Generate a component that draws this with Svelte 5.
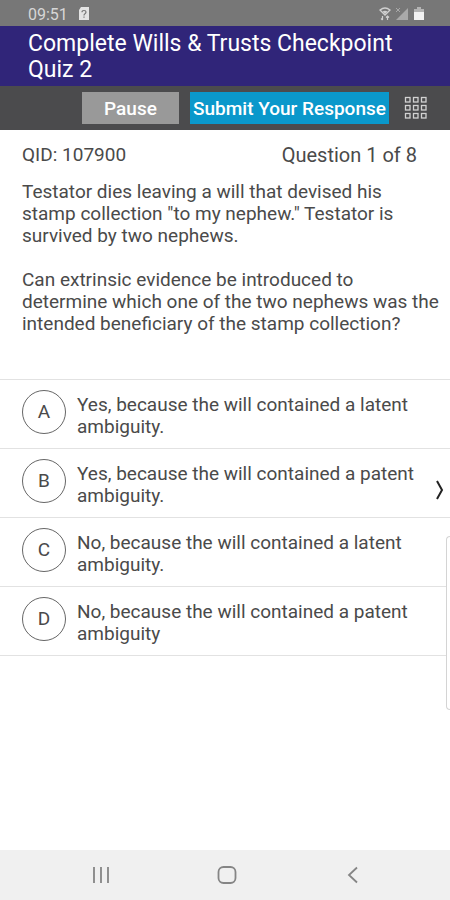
<script>
  const title = 'Complete Wills & Trusts Checkpoint Quiz 2';
  const paragraphs = [
    'Testator dies leaving a will that devised his\nstamp collection "to my nephew." Testator is\nsurvived by two nephews.',
    'Can extrinsic evidence be introduced to\ndetermine which one of the two nephews was the intended beneficiary of the stamp collection?',
  ];
  const answers = [
    { letter: 'A', text: 'Yes, because the will contained a latent ambiguity.' },
    { letter: 'B', text: 'Yes, because the will contained a patent ambiguity.' },
    { letter: 'C', text: 'No, because the will contained a latent ambiguity.' },
    { letter: 'D', text: 'No, because the will contained a patent ambiguity' },
  ];
  const cells = [1, 9, 17];

  let selected = $state(null);
  let paused = $state(false);
</script>

<div class="screen">
  <div class="status">
    <span>09:51</span>
    <svg width="12" height="14" viewBox="0 0 12 14">
      <path d="M3 0h8v13H1V3z" fill="#e4e4e4" />
      <path d="M4 5.2q0-1.7 2-1.7t2 1.6q0 1-1 1.6T6 8.4M6 9.4v1.3" fill="none" stroke="#777" stroke-width="1.2" />
    </svg>
    <div class="signals">
      <svg width="12" height="14" viewBox="0 0 12 14" fill="none" stroke="#d0d0d0">
        <path d="M1 3q5-4 10 0L6 8z" stroke-width="1.3" />
        <path d="M3.5 4.5q2.5-1.5 5 0L6 7z" fill="#d0d0d0" stroke="none" />
        <path d="M3.5 9v4M2 11.5L3.5 13M8.5 13V9M7 10.5L8.500 9 10 10.5" stroke-width="1.2" />
      </svg>
      <svg width="14" height="14" viewBox="0 0 14 14">
        <path d="M13 1v12H1z" fill="#a9a9a9" />
        <path d="M1 1l4 4M5 1L1 5" stroke="#a9a9a9" />
      </svg>
      <svg width="12" height="14" viewBox="0 0 12 14">
        <path d="M4 0h4v2h3v3H1V2h3z" fill="#b4b4b4" />
        <path d="M1 5h10v8H1z" fill="#f2f2f2" />
      </svg>
    </div>
  </div>

  <h1>{title}</h1>

  <div class="toolbar">
    <button class="pause" class:paused onclick={() => (paused = !paused)}>Pause</button>
    <button class="submit">Submit Your Response</button>
    <button class="grid" aria-label="All questions">
      <svg width="24" height="24" viewBox="0 0 24 24" fill="none" stroke="#d2d2d2" stroke-width="1.3">
        {#each cells as y}
          {#each cells as x}
            <rect x={x + 0.5} y={y + 0.5} width="4.5" height="4.5" />
          {/each}
        {/each}
      </svg>
    </button>
  </div>

  <main>
    <div class="meta">
      <span>QID: 107900</span>
      <span class="count">Question 1 of 8</span>
    </div>

    <div class="question">
      {#each paragraphs as paragraph}
        <p>{paragraph}</p>
      {/each}
    </div>

    <div class="answers">
      {#each answers as answer}
        <button
          class="answer"
          class:selected={selected === answer.letter}
          onclick={() => (selected = answer.letter)}
        >
          <span class="letter">{answer.letter}</span>
          <span class="text">{answer.text}</span>
        </button>
      {/each}
      <button class="next" aria-label="Next question">
        <svg width="10" height="22" viewBox="0 0 10 22" fill="none" stroke="#222" stroke-width="2">
          <path d="M2 2l5 9-5 9" />
        </svg>
      </button>
      <div class="drawer"></div>
    </div>
  </main>

  <nav>
    <button aria-label="Recent apps">
      <svg width="20" height="20" viewBox="0 0 20 20" stroke="#858585" stroke-width="1.8">
        <path d="M3 2v16M10 2v16M17 2v16" />
      </svg>
    </button>
    <button aria-label="Home">
      <svg width="20" height="20" viewBox="0 0 20 20" fill="none" stroke="#858585" stroke-width="1.8">
        <rect x="1.5" y="2" width="17" height="16" rx="5" />
      </svg>
    </button>
    <button aria-label="Back">
      <svg width="20" height="20" viewBox="0 0 20 20" fill="none" stroke="#858585" stroke-width="1.8">
        <path d="M14 2.5L6 10l8 7.5" />
      </svg>
    </button>
  </nav>
</div>

<style>
  :global(body) {
    background: #fff;
  }
  .screen {
    display: flex;
    flex-direction: column;
    min-height: 100vh;
    font-family: Roboto, "Liberation Sans", sans-serif;
    color: #4a4a4a;
  }
  button {
    padding: 0;
    border: none;
    background: none;
    font: inherit;
    color: inherit;
    cursor: pointer;
  }
  svg {
    display: block;
  }
  .status {
    display: flex;
    align-items: center;
    gap: 10px;
    height: 26px;
    padding: 2px 25px 0 28px;
    box-sizing: border-box;
    background: #777;
    color: #d6d6d6;
    font-size: 16px;
  }
  .signals {
    display: flex;
    gap: 4px;
    margin-left: auto;
  }
  h1 {
    margin: 0;
    padding: 5px 28px 3px;
    background: #302579;
    color: #fff;
    font-size: 23px;
    font-weight: 400;
    line-height: 26px;
  }
  .toolbar {
    display: flex;
    justify-content: flex-end;
    align-items: center;
    height: 44px;
    padding-right: 22px;
    background: #4b4b4d;
    color: #fff;
    font-size: 19px;
    font-weight: 500;
  }
  .pause,
  .submit {
    height: 32px;
    white-space: nowrap;
  }
  .pause {
    width: 97px;
    margin-right: 11px;
    background: #999;
  }
  .pause.paused {
    background: #7d7d7d;
  }
  .submit {
    width: 199px;
    margin-right: 15px;
    background: #0a98cb;
  }
  main {
    flex: 1;
  }
  .meta {
    display: flex;
    justify-content: space-between;
    padding: 14px 33px 0 22px;
    font-size: 19px;
    line-height: 22px;
  }
  .count {
    font-size: 20px;
  }
  .question {
    padding: 15px 8px 44px 22px;
    font-size: 19px;
    line-height: 22px;
    white-space: pre-line;
  }
  .question p {
    margin: 0;
  }
  .question p + p {
    margin-top: 22px;
  }
  .answers {
    position: relative;
    border-top: 1px solid #e2e2e2;
  }
  .answer {
    display: flex;
    align-items: flex-start;
    gap: 11px;
    width: 100%;
    padding: 10px 32px 10px 22px;
    border-bottom: 1px solid #e2e2e2;
    font-size: 19px;
    line-height: 22px;
    text-align: left;
  }
  .letter {
    display: flex;
    flex: none;
    align-items: center;
    justify-content: center;
    width: 44px;
    height: 44px;
    box-sizing: border-box;
    border: 1px solid #666;
    border-radius: 50%;
  }
  .text {
    padding-top: 4px;
  }
  .selected .letter {
    background: #0a98cb;
    color: #fff;
  }
  .next {
    position: absolute;
    top: 99px;
    right: 5px;
  }
  .drawer {
    position: absolute;
    top: 156px;
    right: 0;
    width: 4px;
    height: 174px;
    box-sizing: border-box;
    border: 1px solid #d4d4d4;
    border-right: none;
    border-radius: 6px 0 0 6px;
    background: #fff;
  }
  nav {
    display: flex;
    justify-content: space-around;
    align-items: center;
    height: 50px;
    padding: 0 34px 0 38px;
    background: #f0f0f0;
  }
</style>
